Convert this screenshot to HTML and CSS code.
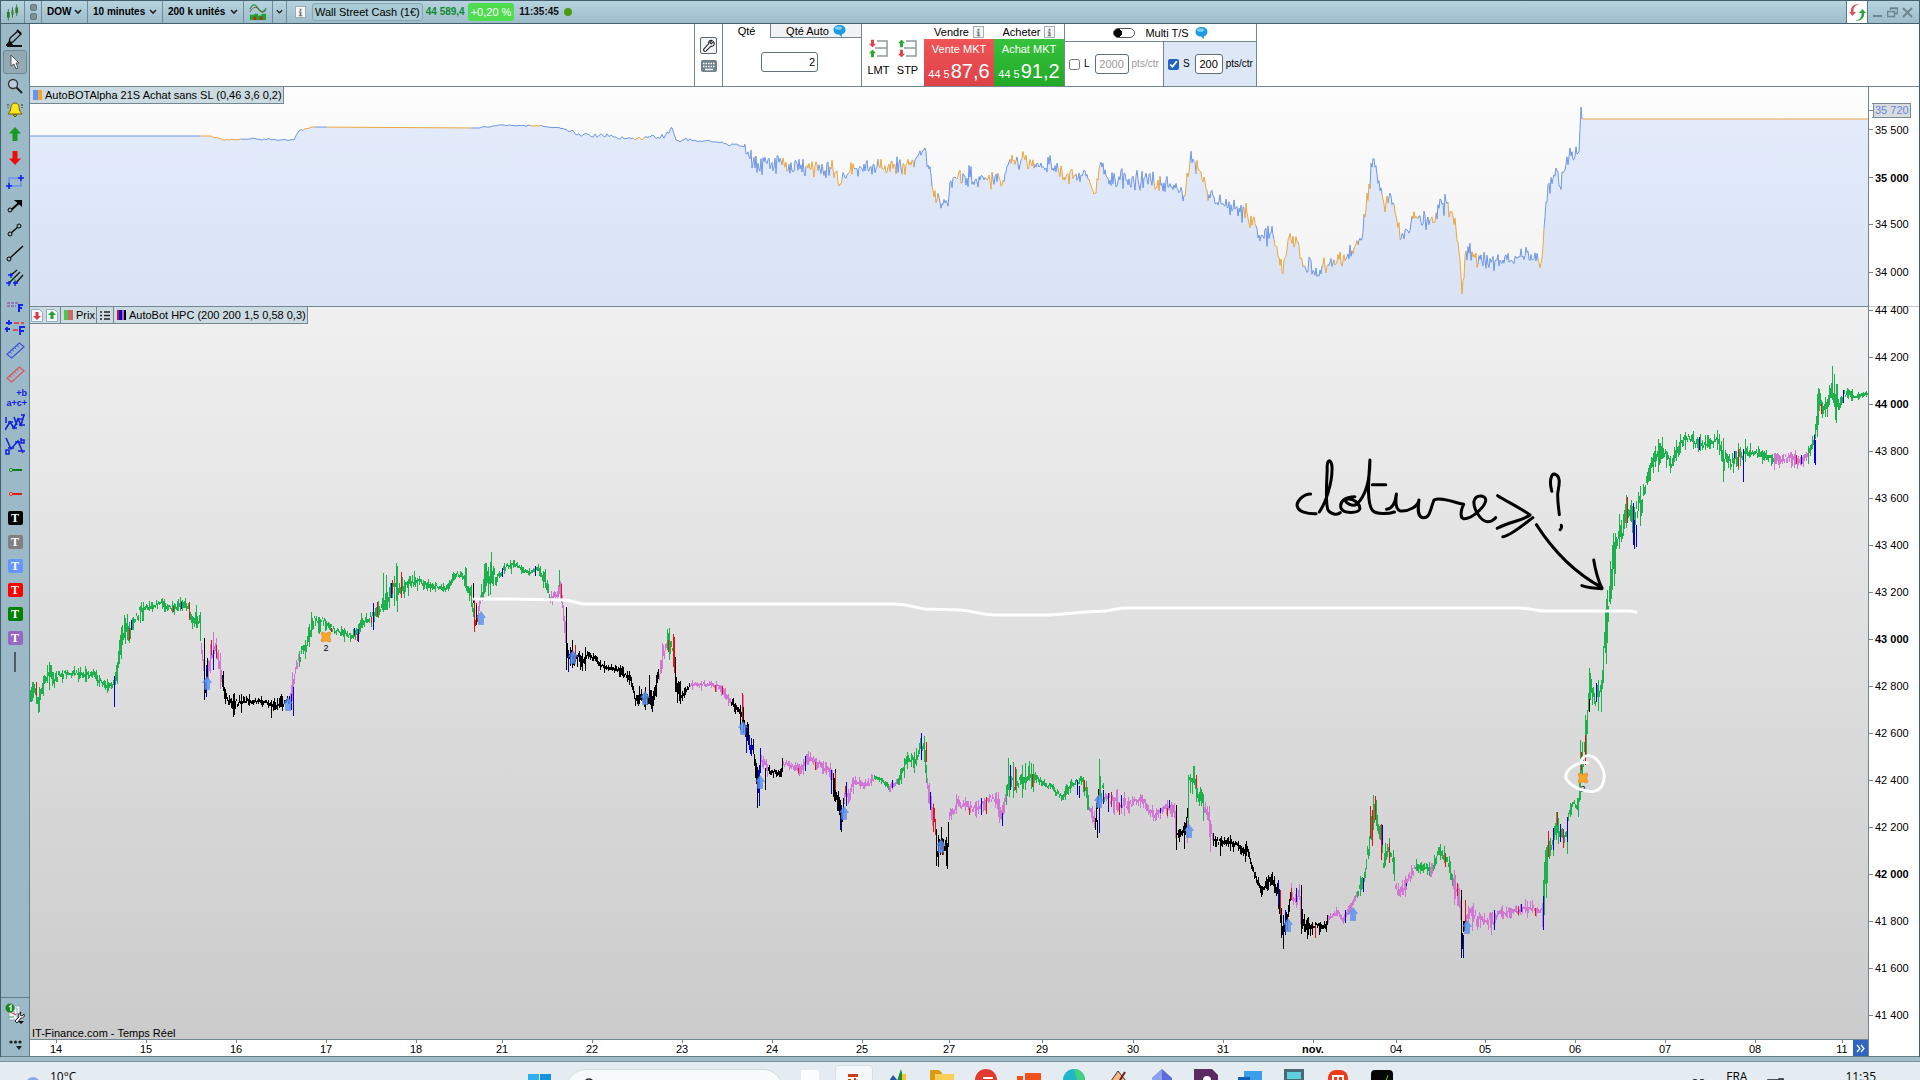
FILE: index.html
```html
<!DOCTYPE html>
<html lang="fr">
<head>
<meta charset="utf-8">
<title>DOW - 10 minutes</title>
<link rel="stylesheet" href="styles.css">
</head>
<body>
<svg width="0" height="0" class="defs" aria-hidden="true">
  <symbol id="chev" viewBox="0 0 8 6"><path d="M1 1l3 3 3-3" fill="none" stroke="#222" stroke-width="1.6"/></symbol>
  <symbol id="info" viewBox="0 0 12 13"><rect x=".5" y=".5" width="11" height="12" fill="#f4f6f7" stroke="#9aa7ae"/><path d="M5 3h2v2H5zM4 6h3v4h1v1H4v-1h1V7H4z" fill="#777"/></symbol>
  <symbol id="bubble" viewBox="0 0 13 12"><path d="M6.500 0C10 0 12.500 2 12.500 4.800 12.500 7.200 11 8.800 9 9.300L8.500 12 6 9.600C2.500 9.500.5 7.500.5 4.800.5 2 3 0 6.500 0z" fill="#1f9be0"/><ellipse cx="5.500" cy="3" rx="3.500" ry="1.800" fill="#7fd0f8"/></symbol>
  <symbol id="wrench" viewBox="0 0 16 16"><path d="M13 3l-2.500 2.500-1-.5-.4-1L11.500 1.700C9.500 1 7 2.500 7.500 5.500L2 11.500c-1 1.500 1 3.500 2.500 2.300L10 8.300c3 .6 5-2 3.500-5z" fill="none" stroke="#222" stroke-width="1.200"/></symbol>
  <symbol id="up" viewBox="0 0 12 14"><path d="M6 0l6 6.500H8.500V14h-5V6.500H0z"/></symbol>
  <symbol id="down" viewBox="0 0 12 14"><path d="M6 14l6-6.500H8.500V0h-5v7.500H0z"/></symbol>
  <symbol id="ruler" viewBox="0 0 20 18"><path d="M1 13L14 1l5 4L6 17z" fill="none" stroke="currentColor" stroke-width="1.300"/><path d="M4 10.500l2 1.700M6.500 8.200l2 1.700M9 6l2 1.700M11.500 3.600l2 1.700" stroke="currentColor"/></symbol>
  <symbol id="buy" viewBox="0 0 10 14"><path d="M5 .5l4.500 6h-2v7h-5v-7h-2z" fill="#5d95f6" stroke="#4a7fdd" stroke-opacity=".6"/></symbol>
  <symbol id="exit" viewBox="0 0 12 12"><path d="M2 1l2 .5 2 .8 2-.8L10 1l1 1-.7 2-.6 2 .6 2 .7 2-1 1-2-.5-2-.8-2 .8L2 11l-1-1 .7-2 .6-2-.6-2L1 2z" fill="#f9a42c" stroke="#d98a18" stroke-width=".6"/></symbol>
</svg>

<div class="app">
  <header class="titlebar">
    <span class="cell c-candles"><svg width="14" height="17" viewBox="0 0 14 17"><g fill="#2f7a2a" stroke="#2f7a2a"><path d="M2.500 5v12M7 3v11M11.500 0v12" fill="none"/><path d="M1 8h3v6H1zM6 6h2v5H6zM10 3h3v6h-3z" stroke="none"/></g></svg></span>
    <span class="cell c-grip"><i></i><i></i></span>
    <label class="cell c-symbol"><select aria-label="Instrument"><option>DOW</option></select><svg width="8" height="6"><use href="#chev"/></svg></label>
    <label class="cell c-frame"><select aria-label="Unité de temps"><option>10 minutes</option></select><svg width="8" height="6"><use href="#chev"/></svg></label>
    <label class="cell c-units"><select aria-label="Historique"><option>200 k unités</option></select><svg width="8" height="6"><use href="#chev"/></svg></label>
    <button class="cell c-indic" aria-label="Indicateurs"><svg width="20" height="18" viewBox="0 0 20 18"><path d="M1 6C4-1 7 0 10 5s6 5 9 0" fill="none" stroke="#2f9a3a" stroke-width="1.400"/><path d="M1 9c4-7 8-6 10-3s5 4 8 1" fill="none" stroke="#7b4a4a"/><path d="M1 12h5v-1h4v2h4v-2h5v7H1z" fill="#1ca52c"/><path d="M5 14h3v4H5zM12 14h3v4h-3z" fill="#c22"/></svg></button>
    <button class="cell c-more" aria-label="Plus"><svg width="8" height="6"><use href="#chev"/></svg></button>
    <svg class="infoicon" width="11" height="12"><use href="#info"/></svg>
    <span class="instrument">Wall Street Cash (1€)</span>
    <span class="last">44 589,4</span>
    <span class="change">+0,20 %</span>
    <time>11:35:45</time>
    <i class="live"></i>
    <div class="window-tools">
      <button class="refresh" aria-label="Actualiser"><svg width="17" height="17" viewBox="0 0 17 17"><path d="M12 1C7 0 4 3 4.500 8H7l-3.500 4L0 8h2C1 3 6-1.500 12 1z" fill="#e0525a"/><path d="M5 16c5 1 8-2 7.500-7H10l3.500-4L17 9h-2c1 5-4 9.500-10 7z" fill="#28a53a"/></svg></button>
      <button aria-label="Réduire"><svg width="11" height="11"><path d="M1 9h9" stroke="#6d858f" stroke-width="2"/></svg></button>
      <button aria-label="Restaurer"><svg width="11" height="11"><path d="M3.500 3V1.500h7v5H8M.5 4.500h7v5h-7zM3 1h8" fill="none" stroke="#6d858f" stroke-width="1.500"/></svg></button>
      <button aria-label="Fermer"><svg width="11" height="11"><path d="M1 1l9 9M10 1l-9 9" stroke="#6d858f" stroke-width="2"/></svg></button>
    </div>
  </header>

  <div class="body">
    <nav class="tools" aria-label="Outils">
      <button aria-label="Crayon"><svg width="18" height="18"><path d="M3 14l1-5 8-7 3 3-8 8z" fill="none" stroke="#111" stroke-width="1.300"/><path d="M11 1l4 4M1 17h15M1 16l3-3 2 3z" stroke="#111" stroke-width="2"/></svg></button>
      <button class="on" aria-label="Curseur"><svg width="12" height="16"><path d="M2 1v11l3-2 2 5 2-1-2-5h3z" fill="#fff" stroke="#555"/></svg></button>
      <button aria-label="Loupe"><svg width="16" height="16"><circle cx="6" cy="6" r="4.500" fill="#bcd" stroke="#333" stroke-width="1.300"/><path d="M9.500 9.500L15 15" stroke="#222" stroke-width="2"/></svg></button>
      <button aria-label="Alerte"><svg width="18" height="16"><path d="M9 1c4 0 4 4 4.500 7 .5 2 2 3 2.500 4H2c.5-1 2-2 2.500-4C5 5 5 1 9 1zM7 13h4l-2 2z" fill="#ffe51f" stroke="#6b5a00"/><path d="M2 2v4M16 2v4" stroke="#333" stroke-dasharray="2 1"/></svg></button>
      <button aria-label="Achat"><svg width="12" height="14" fill="#169a22"><use href="#up"/></svg></button>
      <button aria-label="Vente"><svg width="12" height="14" fill="#f00a0a"><use href="#down"/></svg></button>
      <button aria-label="Rectangle"><svg width="18" height="14"><path d="M3 3h12v8H3z" fill="none" stroke="#6d8ff0" stroke-width="1.500"/><path d="M15 0v6M12 3h6M3 8v6M0 11h6" stroke="#12e" stroke-width="1.600"/></svg></button>
      <button aria-label="Flèche"><svg width="16" height="14"><path d="M4 11l8-7" stroke="#000" stroke-width="2"/><path d="M7 1h8v7z"/><circle cx="3" cy="11" r="2" fill="#9bb9c6" stroke="#000"/></svg></button>
      <button aria-label="Segment"><svg width="16" height="14"><path d="M4 10l7-6" stroke="#000" stroke-width="1.300"/><g fill="#9bb9c6" stroke="#000"><circle cx="3" cy="11" r="2"/><circle cx="12" cy="3" r="2"/></g></svg></button>
      <button aria-label="Droite"><svg width="18" height="18"><path d="M4 13L17 1" stroke="#000" stroke-width="1.300"/><circle cx="3" cy="14" r="2" fill="#9bb9c6" stroke="#000"/></svg></button>
      <button aria-label="Canal"><svg width="18" height="18"><path d="M4 7l7-6M3 14L14 3M9 15l8-9" stroke="#111" stroke-width="1.300"/><path d="M6 9l4 3" stroke="#2a2"/><path d="M5 4v5M2 6h5M3 12v5M0 14h5M9 12v5M7 14h5" stroke="#12e" stroke-width="1.500"/></svg></button>
      <button class="low" aria-label="Fibonacci"><svg width="18" height="14"><path d="M1 5h11M1 8h9" stroke="#8a3a9a" stroke-dasharray="3 1"/><path d="M13 14V7h4M13 10h3" fill="none" stroke="#12e" stroke-width="2"/></svg></button>
      <button class="low" aria-label="Extension Fibonacci"><svg width="20" height="16"><path d="M9 3h10M8 10h6" stroke="#d33" stroke-width="1.500" stroke-dasharray="5 2"/><path d="M15 15V7h5M15 11h4M4 0v5M1 3h6M2 7v5M0 9h5" fill="none" stroke="#12e" stroke-width="1.800"/></svg></button>
      <button class="blue" aria-label="Règle"><svg width="19" height="17"><use href="#ruler"/></svg></button>
      <button class="red" aria-label="Règle rouge"><svg width="19" height="17"><use href="#ruler"/></svg></button>
      <button class="pts" aria-label="Points ABC"><span>+b</span><span>a+c+</span></button>
      <button aria-label="Vagues 12345"><svg width="20" height="18"><path d="M0 17l5-8 4 6 4-9 3 6 3-10M9 4l3 8" fill="none" stroke="#12d" stroke-width="1.600"/><path d="M3 9h5M7 15h5M12 6h5M14 12h6M16 2h4M1 4v6" stroke="#12d" stroke-width="1.500"/></svg></button>
      <button aria-label="Vagues ABC"><svg width="20" height="18"><path d="M1 1l5 11 7-8 5 12" fill="none" stroke="#12d" stroke-width="1.500"/><path d="M3 11h6M10 5h5M13 14h7M16 1v5h3V3h-3M1 13h3v4H1z" fill="none" stroke="#12d" stroke-width="1.500"/></svg></button>
      <button aria-label="Ligne verte"><svg width="14" height="6"><path d="M4 3h10" stroke="#0a7a1a" stroke-width="2"/><circle cx="3" cy="3" r="1.500" fill="#cfd" stroke="#0a7a1a"/></svg></button>
      <button aria-label="Ligne rouge"><svg width="14" height="6"><path d="M4 3h10" stroke="#e01a1a" stroke-width="2"/><circle cx="3" cy="3" r="1.500" fill="#fdd" stroke="#e01a1a"/></svg></button>
      <button aria-label="Texte noir"><b class="t t1">T</b></button>
      <button aria-label="Texte gris"><b class="t t2">T</b></button>
      <button aria-label="Texte bleu"><b class="t t3">T</b></button>
      <button aria-label="Texte rouge"><b class="t t4">T</b></button>
      <button aria-label="Texte vert"><b class="t t5">T</b></button>
      <button aria-label="Texte violet"><b class="t t6">T</b></button>
      <button aria-label="Verticale"><svg width="2" height="20"><path d="M1 0v20" stroke="#000"/></svg></button>
      <div class="tools-end">
        <button aria-label="Configuration"><svg width="20" height="22"><path d="M4 5h8v12H4zM9 3h6v8H9z" fill="#eef3f5" stroke="#9ab"/><path d="M5 9l6 3" stroke="#d33"/><path d="M4 14h5" stroke="#2a4"/><circle cx="5" cy="5" r="4.500" fill="#148a1c"/><path d="M4 4l2-1.500V8" fill="none" stroke="#fff" stroke-width="1.300"/><path d="M16 9l-1 3 2 1 2-2c1 3-1 4-3 4l-4 5-2-2 4-4c-1-3 0-4 2-5z" fill="#fff" stroke="#222"/><path d="M13 18h6l-3 3z"/></svg></button>
        <button aria-label="Plus d’outils"><svg width="16" height="12"><g fill="#222"><circle cx="4" cy="4" r="1.600"/><circle cx="8.500" cy="4" r="1.600"/><circle cx="13" cy="4" r="1.600"/><path d="M9 8h6l-3 4z"/></g></svg></button>
      </div>
    </nav>

    <main class="content">
      <section class="order">
        <div class="order-box">
          <div class="o-tools">
            <button class="wr" aria-label="Réglages"><svg width="14" height="14"><use href="#wrench"/></svg></button>
            <button class="kb" aria-label="Clavier"><svg width="16" height="12"><rect width="16" height="12" rx="2" fill="#71818c"/><path d="M2 3.500h12M2 6.500h12" stroke="#fff" stroke-width="1.500" stroke-dasharray="1.500 1"/><path d="M4 9.500h8" stroke="#fff" stroke-width="1.500"/></svg></button>
          </div>
          <div class="o-qty">
            <div class="tabs"><button class="tab sel">Qté</button><button class="tab">Qté Auto <svg width="13" height="12"><use href="#bubble"/></svg></button></div>
            <input class="num qty" value="2" aria-label="Quantité">
          </div>
          <div class="o-types">
            <button><svg width="19" height="19"><path d="M8 2h10v15H8M6 9h12" fill="none" stroke="#8f9ba1" stroke-width="1.500"/><svg width="7" height="9" viewBox="0 0 12 14" fill="#e0424a"><use href="#down"/></svg><svg y="10" width="7" height="9" viewBox="0 0 12 14" fill="#2aa832"><use href="#up"/></svg></svg>LMT</button>
            <button><svg width="19" height="19"><path d="M8 2h10v15H8M6 9h12" fill="none" stroke="#8f9ba1" stroke-width="1.500"/><svg width="7" height="9" viewBox="0 0 12 14" fill="#2aa832"><use href="#up"/></svg><svg y="10" width="7" height="9" viewBox="0 0 12 14" fill="#e0424a"><use href="#down"/></svg></svg>STP</button>
          </div>
          <div class="o-side">
            <div class="head">Vendre <svg width="11" height="12"><use href="#info"/></svg></div>
            <button class="mkt sell">Vente MKT<span><small>44 5</small>87,6</span></button>
          </div>
          <div class="o-side">
            <div class="head">Acheter <svg width="11" height="12"><use href="#info"/></svg></div>
            <button class="mkt buy">Achat MKT<span><small>44 5</small>91,2</span></button>
          </div>
          <div class="o-multi">
            <label class="m-head"><input type="checkbox" class="switch"> Multi T/S <svg width="13" height="12"><use href="#bubble"/></svg></label>
            <div class="m-body">
              <div class="m-l"><label><input type="checkbox"> L</label><input class="num off" value="2000" aria-label="Limite"><span class="off">pts/ctr</span></div>
              <div class="m-s"><label><input type="checkbox" checked> S</label><input class="num" value="200" aria-label="Stop"><span>pts/ctr</span></div>
            </div>
          </div>
        </div>
      </section>

      <section class="charts">
        <div class="plot equity">
          <svg id="equity" viewBox="0 0 1838 219" preserveAspectRatio="none"></svg>
          <div class="legend"><span><i class="sw sw-eq"></i>AutoBOTAlpha 21S Achat sans SL (0,46 3,6 0,2)</span></div>
        </div>
        <ul class="yaxis y1">
          <li class="cur">35 720</li><li>35 500</li><li class="b">35 000</li><li>34 500</li><li>34 000</li>
        </ul>
        <div class="plot price">
          <svg viewBox="0 0 1838 732" preserveAspectRatio="none">
            <g id="bars"></g>
            <g id="marks"></g>
            <path d="M444 292H480L536 293 553 297H865C880 297 885 301 895 302L930 303C945 304 950 308 965 308H1015C1035 308 1040 305 1075 304 1085 303 1088 301 1095 301H1490C1500 301 1505 304 1515 304H1600L1606 305" fill="none" stroke="#fff" stroke-width="3" stroke-linecap="round" stroke-linejoin="round"/>
            <g transform="translate(1230 43) scale(.3954 .3333)" fill="none" stroke-linecap="round" stroke-linejoin="round">
              <g class="ink" stroke="#000">
                <path d="M128 432C108 432 92 455 94 468C96 485 120 492 142 491"/>
                <path d="M150 486C165 460 184 400 182 350C180 325 168 325 170 360C168 410 165 460 172 480C178 492 195 497 203 488"/>
                <path d="M240 440C215 440 200 455 205 475C212 492 248 490 252 478C255 462 235 442 216 448C215 460 235 472 245 462C265 440 278 400 278 330C274 400 270 460 285 482C295 494 325 492 340 486"/>
                <path d="M284 404H318"/>
                <path d="M320 478C335 476 342 462 345 432C342 460 345 480 355 483C375 485 400 470 402 450C400 470 396 500 412 503C430 505 430 480 440 450C455 440 485 455 515 463C508 480 505 505 515 506C535 508 570 470 571 450C570 435 545 432 541 455C540 480 560 515 575 515C588 515 592 508 596 503"/>
                <path d="M601 437C625 455 660 475 683 495C665 512 630 515 600 535M690 503C665 525 630 560 614 560"/>
                <path d="M738 424C730 390 738 370 745 372C764 380 755 410 753 430C752 455 756 480 757 494M762 526Q764 535 759 539"/>
                <path d="M699 524C740 600 790 665 865 713M844 630C848 660 855 690 865 716Q835 715 814 707"/>
              </g>
              <g class="ink" stroke="#fff">
                <path d="M828 1238C800 1235 772 1260 773 1283C780 1300 800 1322 840 1325C870 1320 870 1290 871 1275C868 1250 850 1215 828 1217C818 1218 812 1230 812 1237"/>
              </g>
            </g>
          </svg>
          <div class="legend">
            <span class="pair"><svg width="12" height="13"><path d="M.5.5h8l3 3v9H.5z" fill="#f5f8fa" stroke="#8fb0c4"/><path d="M6 11L2 7h2.500V3h3v4H10z" fill="#e0383f"/></svg><svg width="12" height="13"><path d="M.5.5h8l3 3v9H.5z" fill="#f5f8fa" stroke="#8fb0c4"/><path d="M6 2l4 4H7.500v4h-3V6H2z" fill="#1fa52b"/></svg></span>
            <span><i class="sw sw-px"></i>Prix</span>
            <span class="ls"><svg width="10" height="9"><path d="M0 1h2M4 1h6M0 4.500h2M4 4.500h6M0 8h2M4 8h6" stroke="#222" stroke-width="1.500"/></svg></span>
            <span><i class="sw sw-hpc"></i>AutoBot HPC (200 200 1,5 0,58 0,3)</span>
          </div>
          <p class="credit">IT-Finance.com - Temps Réel</p>
        </div>
        <ul class="yaxis y2">
          <li>44 400</li><li>44 200</li><li class="b">44 000</li><li>43 800</li><li>43 600</li><li>43 400</li><li>43 200</li><li class="b">43 000</li><li>42 800</li><li>42 600</li><li>42 400</li><li>42 200</li><li class="b">42 000</li><li>41 800</li><li>41 600</li><li>41 400</li>
        </ul>
        <div class="xrow">
          <ol class="xaxis">
            <li>14</li><li>15</li><li>16</li><li>17</li><li>18</li><li>21</li><li>22</li><li>23</li><li>24</li><li>25</li><li>27</li><li>29</li><li>30</li><li>31</li><li class="b">nov.</li><li>04</li><li>05</li><li>06</li><li>07</li><li>08</li><li>11</li>
          </ol>
          <button class="fwd" aria-label="Aller à la fin"><svg width="9" height="9"><path d="M1 1l3 3.500L1 8M5 1l3 3.500L5 8" fill="none" stroke="#fff" stroke-width="1.200"/></svg></button>
        </div>
        <div class="corner"></div>
      </section>
    </main>
  </div>
</div>

<footer class="taskbar">
  <div class="weather"><svg width="20" height="14"><circle cx="9" cy="9" r="7" fill="#8aa9e6"/><circle cx="15" cy="11" r="5" fill="#a9bfee"/></svg><span>10°C</span></div>
  <div class="dock">
    <button class="start" aria-label="Démarrer"><svg width="23" height="16"><path d="M0 0h11v11H0z" fill="#2fb0f2"/><path d="M12 0h11v11H12z" fill="#1593de"/></svg></button>
    <div class="search"><svg width="14" height="14"><circle cx="6" cy="6" r="4" fill="none" stroke="#333" stroke-width="1.600"/></svg></div>
    <div class="apps">
      <button aria-label="Vue des tâches"><svg width="18" height="12"><path d="M0 1h18v11H0z" fill="#fbfcfd"/></svg></button>
      <button class="active" aria-label="ProRealTime"><svg width="18" height="12"><path d="M3 3h11v9H3z" fill="#fff"/><path d="M3 3h10v3H3zM3 8h3v4H3zM9 7h2v5H9z" fill="#cf3b1b"/><path d="M12 8l4 4h-5z" fill="#456"/></svg></button>
      <button aria-label="Graphiques"><svg width="18" height="12"><path d="M0 12l4-6 5 6z" fill="#2a56a8"/><path d="M8 12l4-12 3 12z" fill="#1f8a2f"/><path d="M13 5h4v7h-4z" fill="#f0c62c"/></svg></button>
      <button aria-label="Dossiers"><svg width="24" height="12"><path d="M0 1h9l3 3v8H0z" fill="#d99b16"/><path d="M5 5h19v7H5z" fill="#fbcf57"/></svg></button>
      <button aria-label="Navigateur"><svg width="22" height="12"><circle cx="11" cy="11" r="11" fill="#e23a2e"/><path d="M8 9h10" stroke="#fff" stroke-width="2"/></svg></button>
      <button aria-label="Office"><svg width="26" height="12"><path d="M0 7h6v5H0zM8 4h16v8H8z" fill="#f0501c"/></svg></button>
      <button aria-label="Edge"><svg width="22" height="12"><circle cx="11" cy="11" r="11" fill="#1fb6c9"/><path d="M11 0a11 11 0 0 1 11 11h-8z" fill="#45cf7c"/></svg></button>
      <button aria-label="Outil"><svg width="18" height="12"><path d="M2 12l7-10 8 10z" fill="#f4b98a" stroke="#4a2d20"/><path d="M16 3l-5 8" stroke="#6a1f1f" stroke-width="2"/></svg></button>
      <button aria-label="Copilot"><svg width="20" height="12"><path d="M10 0l10 9v3H0V9z" fill="#5b6ad8"/><path d="M10 0v12H0V9z" fill="#8fa0ee"/></svg></button>
      <button aria-label="OneNote"><svg width="24" height="12"><path d="M0 0h18l6 6v6H0z" fill="#5b2a63"/><circle cx="13" cy="11" r="4" fill="#fff"/></svg></button>
      <button aria-label="Outlook"><svg width="24" height="12"><path d="M6 2h18v10H6z" fill="#3a9fe8"/><path d="M0 8h12v4H0z" fill="#1261b8"/></svg></button>
      <button aria-label="Calculatrice"><svg width="20" height="12"><path d="M0 0h20v12H0z" fill="#476a76"/><path d="M3 3h14v7H3z" fill="#5fd0de"/></svg></button>
      <button aria-label="Discussion"><svg width="22" height="12"><rect x="1" y="1" width="20" height="20" rx="8" fill="#ee3b1a"/><path d="M5 6h12v6H5z" fill="#fff"/><path d="M7 8h3v4H7zM12 8h3v4h-3z" fill="#ee3b1a"/></svg></button>
      <button aria-label="Terminal"><svg width="22" height="12"><rect y="1" width="22" height="20" rx="4" fill="#050505"/><path d="M15 12l2-6" stroke="#3c3"/></svg></button>
    </div>
  </div>
  <div class="tray">
    <svg width="14" height="8"><circle cx="3" cy="4" r="3" fill="#222"/><circle cx="10" cy="4" r="3" fill="#222"/></svg>
    <span>FRA</span>
    <svg class="batt" width="18" height="8"><path d="M1 8V2h10M12 1h4v5h-4z" fill="none" stroke="#222" stroke-width="1.500"/></svg>
    <time>11:35</time>
    <svg width="12" height="8"><circle cx="6" cy="7" r="4" fill="none" stroke="#333" stroke-width="1.500"/></svg>
  </div>
</footer>
<script src="chart.js"></script>
</body>
</html>
```
FILE: styles.css
```css
* { box-sizing: border-box; }
body {
  margin: 0;
  height: 100vh;
  display: flex;
  flex-direction: column;
  overflow: hidden;
  background: #a2bcc8;
  color: #000;
  font: 11px/14px "Liberation Sans", Arial, sans-serif;
}
button, input, select { font: inherit; color: inherit; }
button {
  display: flex;
  align-items: center;
  justify-content: center;
  padding: 0;
  border: 0;
  background: none;
}
ul, ol, p { margin: 0; padding: 0; list-style: none; }
.defs { position: absolute; }

.app {
  flex: 1;
  min-height: 0;
  display: flex;
  flex-direction: column;
  border: 1px solid #43606f;
  border-bottom: 0;
}

/* Title bar */
.titlebar {
  height: 23px;
  display: flex;
  align-items: center;
  background: linear-gradient(#b7d3e0, #9dbcca);
  border-bottom: 1px solid #43606f;
}
.cell {
  height: 22px;
  display: flex;
  align-items: center;
  justify-content: space-between;
  padding: 0 5px;
  border-right: 1px solid #6f8b98;
}
.cell select {
  appearance: none;
  border: 0;
  padding: 0;
  background: none;
  font-weight: bold;
  font-size: 10px;
}
.c-candles { width: 24px; }
.c-grip { width: 17px; flex-direction: column; justify-content: center; gap: 2px; }
.c-grip i { width: 7px; height: 7px; border-radius: 2px; background: #7d8f99; border: 1px solid #66777f; }
.c-symbol { width: 46px; }
.c-frame { width: 75px; }
.c-units { width: 81px; }
.c-indic { width: 29px; }
.c-more { width: 14px; padding: 0 3px; }
.infoicon { margin: 0 6px 0 8px; }
.instrument {
  padding: 1px 2px;
  border: 1px solid #86a6b3;
  border-radius: 3px;
  background: #a9cad4;
}
.last { margin: 0 3px; color: #128a2c; font-size: 10px; font-weight: bold; }
.change { padding: 2px 3px; border-radius: 3px; background: #4fdc4f; color: #fff; }
.titlebar time { margin: 0 5px; color: #111; font-size: 10px; font-weight: bold; }
.live { width: 8px; height: 8px; border-radius: 50%; background: #4c9a12; }
.window-tools { margin-left: auto; display: flex; align-items: center; padding-right: 4px; }
.window-tools button { width: 15px; height: 22px; }
.window-tools .refresh { width: 22px; margin-right: 2px; background: #fff; border: solid #5b7684; border-width: 0 1px; }

/* Body */
.body { flex: 1; min-height: 0; display: flex; }
.tools {
  width: 29px;
  display: flex;
  flex-direction: column;
  padding: 2px 2px 0;
  background: #9bb9c6;
  border-right: 1px solid #5f7c8a;
}
.tools > button { height: 24px; flex: none; }
.tools .low { align-items: flex-end; padding-bottom: 2px; }
.tools .on { border: 1px solid #6f8994; border-radius: 3px; background: #93a9b3; }
.tools .blue { color: #3a54e0; }
.tools .red { color: #dd5560; }
.tools .pts { flex-direction: column; align-items: flex-end; color: #12d; font-weight: bold; font-size: 9px; line-height: 10px; }
.t {
  width: 15px;
  height: 14px;
  border-radius: 2px;
  color: #fff;
  font: bold 12px/14px "Liberation Serif", serif;
}
.t1 { background: #000; }
.t2 { background: #808080; }
.t3 { background: #6497ff; }
.t4 { background: #f00; }
.t5 { background: #008000; }
.t6 { background: #9668c4; }
.tools-end {
  margin: auto -2px 0;
  height: 60px;
  display: flex;
  flex-direction: column;
  align-items: center;
  justify-content: space-between;
  padding: 5px 0 6px;
  border-top: 1px solid #5f7c8a;
  border-bottom: 1px solid #5f7c8a;
}
.content { flex: 1; min-width: 0; display: flex; flex-direction: column; }

/* Order panel */
.order {
  flex: none;
  display: flex;
  background: #fff;
  border-bottom: 1px solid #74868f;
  padding-left: 664px;
}
.order-box { display: flex; height: 62px; border: solid #74868f; border-width: 0 1px; }
.o-tools {
  width: 28px;
  display: flex;
  flex-direction: column;
  align-items: center;
  gap: 6px;
  padding-top: 13px;
  border-right: 1px solid #74868f;
}
.wr { width: 17px; height: 17px; border: 1px solid #59666d; border-radius: 2px; background: #f2f4f5; }
.o-qty { width: 139px; display: flex; flex-direction: column; gap: 14px; border-right: 1px solid #74868f; }
.tabs { display: flex; height: 14px; }
.tab { flex: 1; gap: 4px; background: #f0f2f3; border: solid #74868f; border-width: 0 0 1px 1px; }
.tab.sel { flex: none; width: 47px; background: #fff; border: 0; }
.num {
  height: 20px;
  padding: 0 2px;
  text-align: right;
  border: 1px solid #5f7079;
  border-radius: 3px;
  background: #fff;
}
.qty { width: 57px; margin-left: 38px; }
.o-types { width: 62px; display: flex; gap: 4px; padding: 15px 4px 0; }
.o-types button { flex: 1; flex-direction: column; gap: 5px; align-self: flex-start; }
.o-side { width: 70px; display: flex; flex-direction: column; }
.head { height: 15px; display: flex; align-items: center; justify-content: center; gap: 4px; }
.mkt { flex: 1; flex-direction: column; gap: 5px; color: #fff; }
.mkt span { display: flex; align-items: baseline; font-size: 20px; line-height: 20px; }
.mkt small { font-size: 11px; margin-right: 1px; }
.sell { background: linear-gradient(#ef5457, #dc4247); }
.buy { background: linear-gradient(#36c23c, #20aa27); }
.o-multi { width: 192px; display: flex; flex-direction: column; border-left: 1px solid #74868f; }
.m-head { height: 18px; display: flex; align-items: center; justify-content: center; gap: 6px; border-bottom: 1px solid #74868f; }
.switch {
  appearance: none;
  width: 22px;
  height: 10px;
  margin: 0 4px 0 0;
  border: 1px solid #555;
  border-radius: 5px;
  background: radial-gradient(circle at 4px 4px, #000 4px, #fff 4px);
}
.m-body { flex: 1; display: flex; font-size: 10px; }
.m-body > div { display: flex; align-items: center; gap: 3px; padding: 0 4px; flex: 1; min-width: 0; }
.m-body label { display: flex; align-items: center; gap: 4px; margin-right: 2px; }
.m-body [type=checkbox] { width: 11px; height: 11px; margin: 0; accent-color: #2563c0; }
.m-body .num { width: 28px; font-size: 11px; }
.m-body .num.off { width: 34px; }
.m-body .off { color: #999; }
.m-body .m-s { background: #dde7f6; border-left: 1px solid #74868f; flex: none; width: 93px; }
.m-body label + .num { text-align: center; }

/* Charts */
.charts {
  flex: 1;
  min-height: 0;
  display: grid;
  grid-template-columns: 1fr 50px;
  grid-template-rows: 220fr 733fr 17px;
  background: #fff;
}
.plot { position: relative; min-height: 0; overflow: hidden; border-right: 1px solid #74868f; border-bottom: 1px solid #74868f; }
.plot > svg { position: absolute; inset: 0; width: 100%; height: 100%; }
.equity { background: linear-gradient(#fdfdfd, #f2f2f2); }
.price { background: linear-gradient(#f0f0f0, #cbcbcb); }
#bars { shape-rendering: crispEdges; }
.ink path { stroke-width: 3px; vector-effect: non-scaling-stroke; }
.legend { position: relative; display: inline-flex; border: solid #74868f; border-width: 0 1px 1px 0; background: #ccdbe2; vertical-align: top; }
.legend span { display: flex; align-items: center; gap: 3px; height: 16px; padding: 0 1px 0 3px; }
.legend span + span { border-left: 1px solid #74868f; }
.legend .pair { padding: 0 2px 0 1px; }
.legend .ls { padding: 0 3px; }
.sw { width: 9px; height: 10px; }
.sw-eq { background: linear-gradient(90deg, #6497f5 50%, #f7a431 50%); }
.sw-px { background: linear-gradient(90deg, #4fc652 50%, #cb6a66 50%); }
.sw-hpc { background: linear-gradient(90deg, #d01030 0 2px, #0000d0 2px 5px, #b060c8 5px 7px, #000 7px); }
.credit { position: absolute; left: 2px; bottom: 0; line-height: 12px; }

.yaxis { display: grid; }
.yaxis::before { content: ""; }
.y1 { grid-template-rows: 23fr 20fr 48fr 47fr 48fr 34fr; border-bottom: 1px solid #c5c9cb; }
.y2 { grid-template-rows: 3fr repeat(15, 47fr) 25fr; }
.yaxis li {
  height: 0;
  display: flex;
  align-items: center;
  gap: 2px;
  white-space: nowrap;
}
.yaxis li::before { content: ""; width: 4px; height: 1px; background: #74868f; }
.yaxis .cur {
  height: 15px;
  margin-top: -7px;
  justify-self: start;
  gap: 2px;
  padding-right: 1px;
  color: #6a88d8;
  background: linear-gradient(90deg, #fff 4px, #7b8b93 4px 5px, #d9dcde 5px);
  border: solid #7b8b93;
  border-width: 1px 1px 1px 0;
  border-image: linear-gradient(90deg, transparent 4px, #7b8b93 4px) 1;
}
.b { font-weight: bold; }
.xrow { display: flex; border-right: 1px solid #74868f; border-bottom: 1px solid #5f7c8a; }
.xaxis {
  flex: 1;
  display: grid;
  grid-template-columns: 26fr repeat(4, 90fr) 86fr repeat(4, 90fr) 87fr 93fr 91fr 90fr 90fr 83fr 89fr 90fr 90fr 90fr 87fr 11fr;
}
.xaxis::before { content: ""; }
.xaxis li { width: 0; display: flex; flex-direction: column; align-items: center; line-height: 13px; white-space: nowrap; }
.xaxis li::before { content: ""; width: 1px; height: 3px; background: #74868f; }
.fwd { width: 15px; background: #2f66c0; }
.corner { border-bottom: 1px solid #5f7c8a; }

/* Taskbar, partly below the edge of the screen */
.taskbar {
  flex: none;
  height: 23px;
  display: grid;
  grid-template-columns: 1fr auto 1fr;
  overflow: hidden;
  border-top: 4px solid #a2bcc8;
  background: #e4ecf1;
  box-shadow: inset 0 1px #7b929d;
  font: 12px/16px "Open Sans", "Noto Sans", sans-serif;
}
.weather { display: flex; gap: 6px; padding: 8px 0 0 24px; }
.weather svg { margin-top: 6px; }
.dock { display: flex; padding-left: 12px; }
.start { align-self: flex-start; margin: 13px 15px 0 0; }
.search { width: 217px; height: 40px; margin-top: 8px; padding: 7px 16px; border: 1px solid #d3dde2; border-radius: 20px; background: #f7fafb; }
.apps { display: flex; margin-left: 5px; }
.apps button { width: 44px; height: 48px; align-items: flex-start; padding-top: 8px; }
.apps .active { margin: 4px 3px 0; width: 38px; border: 1px solid #d5dfe4; border-radius: 4px; background: #f5f8fa; padding-top: 5px; }
.tray { display: flex; justify-content: flex-end; gap: 20px; padding: 8px 20px 0 0; }
.tray svg { margin-top: 9px; }
.tray .batt { margin-right: 40px; }
.tray time { margin-right: -8px; }
```
FILE: chart.js
```js
// Colours of the price bars: trend, range, down trend, sell signal, buy signal
const COLORS = { g: '#1db04c', v: '#d077d4', k: '#000', r: '#e01414', b: '#0000d8' };

// Runs of the price: colour, half height of a bar, then x,y points
const RUNS = [
  ['g', 7, '30,700 34,686 38,702 46,676 50,672 54,680'], ['g', 4, '59,675 75,673 87,675 93,674 101,683 108,688 113,683'],
  ['g', 9, '117,670 120,643 124,628 129,633 134,617'], ['g', 4, '144,608 161,603 173,610 183,603 188,607'],
  ['g', 8, '192,622 195,620 200,623'], ['v', 8, '201,650'], ['k', 12, '205,683'], ['v', 10, '208,667 211,652 216,645 219,663'],
  ['k', 7, '222,680 226,698 232,705'], ['k', 3, '242,701 258,701'], ['k', 5, '275,705 283,703'], ['v', 7, '290,700 295,672'],
  ['g', 9, '299,657 307,642 312,622'], ['g', 4, '324,622 334,630 350,636 356,633'], ['g', 7, '361,622 373,617 381,606'],
  ['g', 14, '389,597 394,590'], ['g', 9, '398,588 404,586'], ['g', 4, '418,580 426,585 446,588 456,573'], ['g', 7, '465,580 471,598'],
  ['r', 14, '474,618'], ['v', 8, '478,612'], ['g', 10, '481,595 485,580 491,573'], ['g', 5, '497,577 506,567'], ['g', 2, '516,565 528,573'],
  ['g', 6, '538,568 545,580'], ['v', 6, '550,600 557,594 560,587 563,610'], ['k', 14, '566,645'], ['k', 8, '569,655 575,657 581,660'],
  ['k', 3, '587,653 601,665'], ['k', 4, '618,670 630,678'], ['k', 7, '635,700 642,697 652,700'], ['v', 9, '659,673 663,655'],
  ['g', 10, '667,642'], ['r', 8, '673,647'], ['k', 9, '675,680 679,693'], ['k', 3, '684,692'], ['v', 3, '690,685 707,684 719,687 725,695'],
  ['k', 5, '731,703 738,708'], ['k', 10, '743,722'], ['b', 12, '749,742'], ['k', 12, '753,753 756,773'], ['b', 12, '758,780'],
  ['v', 7, '761,760 764,765'], ['k', 4, '768,770 780,775'], ['v', 4, '783,763 790,765 800,770 808,757'], ['v', 6, '818,765 828,767'],
  ['k', 10, '833,780 837,800 841,820'], ['v', 10, '844,797 849,797'], ['v', 4, '854,782 866,785'], ['g', 2, '874,778 881,780'],
  ['v', 3, '889,788'], ['g', 6, '897,782 907,760 915,760 921,743 924,752'], ['v', 9, '927,783 930,805'], ['r', 12, '934,820'],
  ['k', 11, '937,850 941,840'], ['k', 4, '947,855'], ['v', 6, '949,815 958,803 976,810 988,800 996,798 1001,818'],
  ['g', 11, '1006,797 1008,780 1016,785 1026,776'], ['g', 4, '1036,778 1051,788 1061,797 1073,783'], ['g', 7, '1081,780 1086,790'],
  ['v', 6, '1089,810'], ['k', 5, '1095,823'], ['g', 16, '1099,787'], ['v', 8, '1105,797 1115,803'], ['v', 5, '1130,803 1142,800 1154,816 1166,807 1174,812'],
  ['k', 6, '1176,833 1184,833'], ['g', 12, '1188,807 1189,783 1194,780 1198,793'], ['v', 9, '1204,807 1210,827'],
  ['k', 5, '1213,840 1229,843 1235,845'], ['k', 2, '1248,852'], ['k', 6, '1252,870 1261,890 1271,880'], ['k', 10, '1277,893 1280,913 1283,932 1287,917'],
  ['v', 10, '1291,896 1295,900 1299,893'], ['k', 7, '1301,920 1305,927 1325,928'], ['v', 2, '1328,918 1337,912 1343,920 1350,907'],
  ['g', 7, '1357,893 1363,883'], ['g', 12, '1367,857 1371,830 1373,812 1378,823'], ['g', 10, '1383,860 1388,852 1393,862'],
  ['v', 6, '1395,887 1399,895 1408,880'], ['g', 4, '1415,867 1427,868'], ['v', 5, '1430,872'], ['g', 5, '1433,867 1439,850 1445,858 1449,865'],
  ['v', 10, '1453,887 1458,890'], ['k', 18, '1461,915 1462,935'], ['v', 9, '1465,920 1470,912 1478,920'], ['v', 5, '1493,921 1500,913 1517,910 1527,907 1535,910 1542,912'],
  ['g', 14, '1543,890 1546,865'], ['g', 9, '1548,852 1553,843 1556,826 1560,833 1567,835'], ['g', 4, '1568,815 1573,803 1578,807'],
  ['g', 20, '1580,775 1584,750 1586,735 1588,705'], ['g', 12, '1590,685 1595,700 1601,690'], ['g', 20, '1604,650 1608,610 1612,567'],
  ['g', 12, '1616,542 1622,530 1627,510'], ['g', 17, '1631,520 1634,517 1638,505'], ['g', 10, '1644,493 1649,473 1655,457'],
  ['g', 6, '1663,452 1671,463 1677,450 1687,437 1697,445 1717,440'], ['g', 12, '1723,458 1731,462 1738,458'], ['g', 4, '1744,453 1754,452 1768,458'],
  ['v', 5, '1774,460 1790,457 1800,463'], ['g', 5, '1808,453 1814,440'], ['g', 14, '1817,413 1819,402'], ['g', 7, '1822,412 1826,408'],
  ['g', 15, '1832,385 1835,400'], ['g', 5, '1839,404 1844,393'], ['g', 2, '1853,397 1868,394']
];

// Single bars: colour, x, top, bottom
const SPIKES = `g 49 662 690,b 114 676 707,r 36 682 696,r 129 628 640,b 131 620 630,r 173 606 612,b 181 602 609,r 189 602 620,g 196 605 628
k 204 638 700,b 206 665 697,r 211 640 655,b 213 650 670,r 216 645 658,k 271 702 718,b 291 694 710,b 293 687 716,v 292 690 701,r 331 628 632,b 354 628 635
r 357 634 641,b 358 629 642,r 371 617 623,b 373 603 630,r 377 602 617,b 391 583 598,r 392 580 594,g 383 573 612,g 386 575 610,r 401 572 598,g 465 567 588
k 473 583 603,r 474 600 632,k 476 605 625,g 490 562 595,b 502 568 577,b 535 566 576,g 559 570 587,r 561 584 598,k 566 607 670,b 568 650 672,r 575 645 660
k 572 640 668,k 649 675 704,k 651 690 709,g 667 629 650,r 668 640 652,r 674 637 658,k 675 657 692,k 677 690 703,r 715 685 692,r 722 686 694,r 742 693 720
v 743 695 707,k 740 705 730,b 746 725 753,b 751 738 756,k 757 770 808,b 759 775 806,k 765 768 790,r 798 768 773,b 805 756 771,r 815 762 770,b 831 770 794,r 835 773 790
k 840 800 830,b 841 805 830,b 846 782 806,r 845 786 794,b 892 780 788,b 921 733 760,g 924 736 762,r 926 742 762,b 930 792 810,r 933 804 832,k 936 829 866
k 938 835 867,k 941 827 850,r 943 845 855,r 969 808 815,b 981 798 815,r 986 797 814,b 1002 813 826,b 1010 765 790,g 1013 762 798,r 1015 767 790,r 1032 774 787,g 1028 766 780
b 1077 780 795,b 1079 786 798,r 1084 780 791,k 1097 820 838,b 1099 804 833,g 1099 759 800,b 1103 790 804,b 1108 793 812,r 1111 792 807,b 1121 795 808,r 1119 803 815
b 1160 808 813,r 1167 808 816,b 1169 800 808,k 1176 805 850,v 1187 820 843,g 1188 775 822,g 1194 766 782,r 1196 775 788,v 1210 820 852,k 1220 842 856,b 1278 880 905,r 1280 890 915
k 1283 915 949,b 1285 910 935,r 1291 888 900,b 1296 888 902,k 1301 885 934,r 1315 925 938,b 1345 910 923,b 1363 878 892,r 1370 806 838,r 1372 810 846,r 1375 796 820,g 1373 795 830
r 1381 824 850,b 1382 825 845,r 1381 840 860,r 1389 843 863,b 1406 883 886,r 1445 853 867,r 1457 883 896,k 1461 890 958,b 1463 935 958,r 1465 900 928,v 1454 870 905
b 1494 910 930,r 1518 906 915,b 1521 904 912,r 1535 908 916,b 1543 896 930,g 1543 880 910,g 1546 855 898,r 1548 831 857,b 1553 828 850,r 1557 812 825,g 1556 812 840,b 1560 824 842
r 1563 829 848,b 1567 817 842,g 1580 740 800,r 1581 752 770,r 1585 735 765,g 1589 668 700,k 1589 699 712,b 1596 683 702,g 1607 590 638,g 1612 545 590,r 1627 497 523,b 1633 503 545,b 1634 520 549,b 1636 525 547
b 1699 437 450,g 1723 440 482,b 1734 451 458,r 1738 449 468,b 1743 449 482,g 1745 439 462,r 1796 455 464,b 1801 455 464,b 1814 435 463,b 1815 440 465,r 1821 404 414,g 1832 366 400,g 1834 374 405,b 1843 390 403`;

const BUYS = '207,683 288,704 481,618 573,657 645,698 743,728 760,782 844,813 941,846 1099,801 1189,831 1288,925 1353,914 1467,927';
const EXITS = '326,637 1583,778';

// Equity curve
const EQUITY = '30,136 211,136 225,140 250,139 294,140 299,131 313,127 478,128 500,125 539,126 566,129 575,134 612,136 631,139 650,137 665,136 672,128 676,140 700,141 735,144 744,147 749,157 759,169 766,162 784,163 808,168 833,169 840,184 850,171 857,169 906,165 915,160 924,150 928,165 933,190 940,202 948,206 951,181 965,176 980,180 1004,182 1009,162 1041,163 1078,178 1085,171 1095,193 1100,165 1108,178 1151,181 1178,190 1185,196 1190,162 1193,159 1200,171 1210,198 1225,206 1247,213 1259,235 1273,235 1283,274 1288,240 1298,242 1303,267 1325,268 1347,257 1362,239 1369,184 1374,159 1384,204 1391,196 1401,239 1415,218 1433,223 1441,200 1455,218 1460,260 1462,294 1466,251 1482,262 1518,257 1542,258 1546,202 1556,168 1559,186 1569,157 1577,154 1579,152 1581,107 1582,119 1868,119';

const X0 = 30, PRICE_Y0 = 307, EQUITY_Y0 = 87;
let seed = 7;
const rnd = () => (seed = (seed * 16807) % 2147483647) / 2147483647;
const points = text => text.trim().split(/\s+/).map(p => p.split(',').map(Number));

function priceBars() {
  const pts = RUNS.flatMap(([c, a, t]) => points(t).map(([x, y]) => ({ x, y, a, c })));
  const d = { g: '', v: '', k: '', r: '', b: '' };
  const bar = (c, x, top, bottom) => { d[c] += `M${x - X0 + .5} ${Math.round(top - PRICE_Y0)}V${Math.round(bottom - PRICE_Y0)}`; };
  for (let i = 0; i < pts.length - 1; i++) {
    const p = pts[i], q = pts[i + 1];
    for (let x = p.x; x < q.x; x++) {
      const f = (x - p.x) / (q.x - p.x), y = p.y + (q.y - p.y) * f;
      const slope = Math.min(10, Math.abs(q.y - p.y) / (q.x - p.x) / 2);
      const mid = y + (rnd() - .5) * p.a * 1.1, half = 1 + slope + rnd() * rnd() * p.a * 1.7;
      bar(p.c, x, mid - half, mid + half);
    }
  }
  const spikes = { g: '', v: '', k: '', r: '', b: '' };
  for (const s of SPIKES.split(/[,\n]/)) {
    const [c, x, top, bottom] = s.split(' ');
    spikes[c] += `M${x - X0 + .5} ${top - PRICE_Y0}V${bottom - PRICE_Y0}`;
  }
  const draw = set => Object.keys(set).map(c => `<path d="${set[c]}" stroke="${COLORS[c]}"/>`).join('');
  document.getElementById('bars').innerHTML = draw(d) + draw(spikes);
}

function markers() {
  const buys = points(BUYS).map(([x, y]) => `<use href="#buy" x="${x - X0 - 5}" y="${y - PRICE_Y0 - 7}" width="10" height="14" opacity=".85"/>`);
  const exits = points(EXITS).map(([x, y]) => `<use href="#exit" x="${x - X0 - 6}" y="${y - PRICE_Y0 - 6}" width="12" height="12"/><text x="${x - X0}" y="${y - PRICE_Y0 + 14}" text-anchor="middle" font-size="9">2</text>`);
  document.getElementById('marks').innerHTML = buys.join('') + exits.join('');
}

function equity() {
  const pts = points(EQUITY), line = [];
  for (let i = 0; i < pts.length - 1; i++) {
    const [x1, y1] = pts[i], [x2, y2] = pts[i + 1];
    const noise = x1 < 560 ? 1 : x1 >= 1577 ? 0 : x1 < 740 ? 3 : 12;
    const step = x1 < 740 ? 2 : 1;
    for (let x = x1; x < x2; x += step) {
      const jump = x === x1 || x1 === 30 || x1 === 313 ? 0 : (rnd() + rnd() - 1) * noise;
      line.push([x - X0, y1 + (y2 - y1) * (x - x1) / (x2 - x1) - EQUITY_Y0 + jump]);
    }
  }
  line.push([1838, 32]);
  let blue = '', orange = '', on = false;
  for (let i = 0; i < line.length - 1; i++) {
    const x = line[i][0], step = `M${line[i]}L${line[i + 1]}`;
    if (i % 6 === 0) on = rnd() > .65;
    const isOrange = x < 170 ? false : x < 210 ? true : x < 262 ? false : (x > 295 && x < 440) || x > 1551 || (on && x < 1515);
    if (isOrange) orange += step; else blue += step;
  }
  document.getElementById('equity').innerHTML =
    `<defs><linearGradient id="fill" x1="0" y1="0" x2="0" y2="1"><stop stop-color="#e4ecfc"/><stop offset="1" stop-color="#d9e3f3"/></linearGradient></defs>
     <path d="M0 219L${line.join('L')}V219z" fill="url(#fill)"/>
     <path d="${blue}" stroke="#6f97e6" fill="none"/><path d="${orange}" stroke="#eba742" fill="none"/>`;
}

priceBars();
markers();
equity();
```
